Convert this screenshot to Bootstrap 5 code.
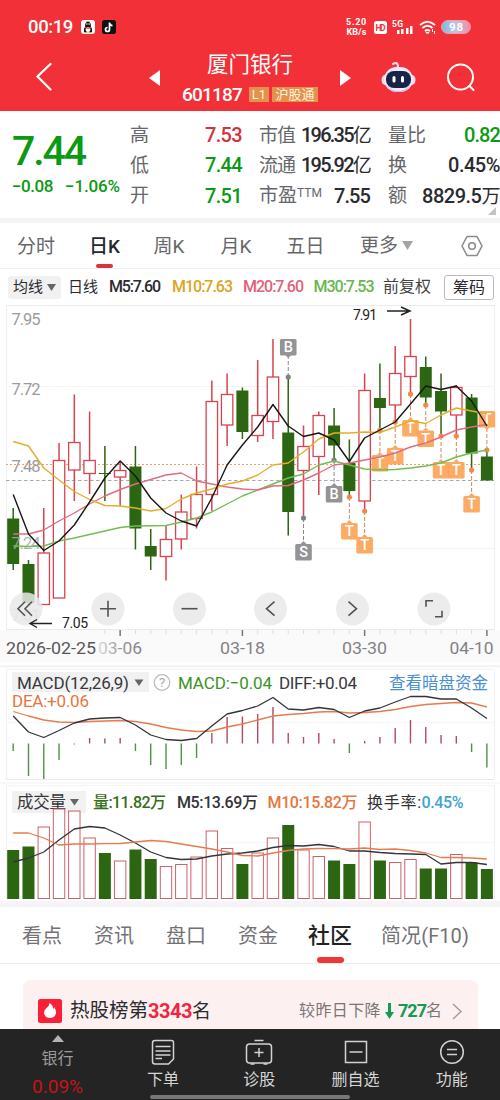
<!DOCTYPE html>
<html lang="zh-CN">
<head>
<meta charset="utf-8">
<meta name="viewport" content="width=device-width, initial-scale=1">
<title>厦门银行 601187</title>
<link href="https://cdn.jsdelivr.net/npm/bootstrap@5.3.0/dist/css/bootstrap.min.css" rel="stylesheet">
<style>
body{width:500px;height:1100px;overflow:hidden;background:#fff;color:#2b2b2f;font-family:Roboto,"Noto Sans CJK SC",sans-serif;line-height:1;font-size:19px}
svg{display:block;flex:none}
svg text{font-family:Roboto,"Noto Sans CJK SC",sans-serif}
span,b{white-space:nowrap}
.brand-top{background:#f23037;height:111px;color:#fff}
.status{height:52px;padding:2px 29px 0 28px}
.netspeed{font-size:9px;font-weight:700}
.netspeed span{height:10px;line-height:10px}
.topnav{height:59px}
.tagx{background:#e2924d;font-size:13px;height:15px;line-height:15px;color:#fff3dc;text-align:center}
.quote{height:107px;padding:9px 0 0 12px;grid-template-columns:118px 112px 111px 112px;column-gap:0;display:grid}
.kv{height:30.3px;color:#66666a}
.kv b{font-weight:500;color:#2b2b2f;font-size:20px}
.kv b i{font-style:normal;font-weight:400;font-size:19px}
.up{color:#d4323c!important}.down{color:#0b9a13!important}
.strip{background:#f4f4f5}
.period{height:46px;display:grid;grid-template-columns:72px 64.5px 67px 66px 73.5px 101px 40px;padding-left:17px;border-bottom:1px solid #f1f1f3;color:#66666a}
.period>*{height:45px;line-height:47px}
.bar{width:17px;height:4px;border-radius:2px;background:#d93340}
.malist{height:36px;font-size:16px;font-weight:500;display:grid;grid-template-columns:60px 41px 63px 71px 70.5px 69.5px 61px 50px;padding-left:8px}
.pill{background:#f1f1f2;height:23px;border-radius:3px;width:53px;padding-left:5px;font-weight:400;font-size:15px}
.chip{border:1px solid #bbb;border-radius:3px;width:50px;height:25px;line-height:23px;text-align:center;font-weight:400}
.subtabs{height:57px;display:grid;grid-template-columns:72px 72px 72px 70px 73px 100px;padding-left:22px;font-size:20px;color:#727276;border-bottom:1px solid #ececee}
.subtabs>*{height:56px;line-height:58px}
.hot{margin:16px 22px 0 23px;height:49px;background:#fcf0f0;border-radius:8px 8px 0 0;padding:12px 16px 0 15px}
.dock{background:#242424;height:71px;color:#d6d6d6;font-size:16px}
.dock .first{width:115px}
.home{position:absolute;left:150px;bottom:1.5px;width:200px;height:4px;border-radius:2px;background:#77777a}
</style>
</head>
<body class="position-relative">
<header class="brand-top">
  <div class="status d-flex align-items-center">
    <span style="font-size:18.500px;font-weight:500" data-w="45">00:19</span>
    <svg class="ms-2" width="14" height="14" viewBox="0 0 14 14"><rect width="14" height="14" rx="3" fill="#fff"/><path d="M3 12q-1-3 1-5 0-5.500 3-5.500T10 7q2 2 1 5z" fill="#151515"/><ellipse cx="7" cy="9.500" rx="2.400" ry="2.500" fill="#fff"/><path d="M4 6.500q3 2 6 0v1.500q-3 1.500-6 0z" fill="#d33"/><circle cx="5.900" cy="4" r=".8" fill="#fff"/><circle cx="8.100" cy="4" r=".8" fill="#fff"/><path d="M3.500 12.500h3M7.500 12.500h3" stroke="#ed9a28" stroke-width="1.200"/></svg>
    <svg style="margin-left:7px" width="14" height="14" viewBox="0 0 14 14"><rect width="14" height="14" rx="2.500" fill="#111"/><path d="M7.500 2.500v7a2 2 0 1 1-2-2M7.500 3q.5 2.500 3 2.700" fill="none" stroke="#fff" stroke-width="1.700"/></svg>
    <span class="ms-auto d-flex flex-column align-items-center netspeed"><span data-w="21">5.20</span><span data-w="20">KB/s</span></span>
    <svg style="margin-right:5px;margin-left:7px" width="13" height="13" viewBox="0 0 13 13"><rect width="13" height="13" rx="2.500" fill="#fff"/><text x="1.500" y="9.700" font-size="8.500" font-weight="700" fill="#f23037" textLength="10">HD</text></svg>
    <svg width="22" height="16" viewBox="0 0 22 16"><text x="0" y="7.500" font-size="8.500" font-weight="700" fill="#fff" textLength="11">5G</text><g fill="#fff"><rect x="5" y="11" width="2.500" height="4"/><rect x="9" y="10" width="2.500" height="5"/><rect x="14" y="9" width="2.500" height="6"/><rect x="18" y="7" width="2.500" height="8"/></g></svg>
    <svg style="margin-left:5px" width="18" height="15" viewBox="0 0 18 15" fill="none" stroke="#fff" stroke-width="1.900"><path d="M1 5q7.500-6.500 15 0M3.500 8q5-4.500 10 0M6 11q2.500-2 5 0"/><path d="M7 12.500h3L8.500 14zM13.500 9v3M15.500 11v3" stroke-width="1"/></svg>
    <svg style="margin-left:4px" width="30" height="14" viewBox="0 0 30 14"><defs><linearGradient id="bt"><stop offset="0" stop-color="#7fb8e2"/><stop offset=".45" stop-color="#b8c8e2"/><stop offset="1" stop-color="#f58aa5"/></linearGradient></defs><rect x=".5" y=".5" width="29" height="13" rx="6.500" fill="url(#bt)" stroke="#f69aa5"/><text x="8" y="11" font-size="11.500" font-weight="700" fill="#fff" textLength="14">98</text></svg>
  </div>
  <div class="topnav d-flex">
    <svg style="margin:10px 0 0 35px" width="17" height="30" viewBox="0 0 17 30"><path d="M15.500 2 2.500 14.500 15.500 27.500" fill="none" stroke="#fff" stroke-width="2.300" stroke-linecap="round"/></svg>
    <svg style="margin:18px 0 0 97px" width="11" height="16"><path d="M11 0v16L0 8z" fill="#fff"/></svg>
    <div style="width:180px" class="text-center">
      <div style="font-size:21.500px;line-height:25px">厦门银行</div>
      <div class="d-flex justify-content-center align-items-center" style="margin-top:7px;height:20px"><span style="font-size:19px;font-weight:500" data-w="60">601187</span><span class="tagx" style="margin-left:7px;width:20px">L1</span><span class="tagx" style="margin-left:3px;width:46px">沪股通</span></div>
    </div>
    <svg style="margin:18px 0 0" width="11" height="16"><path d="M0 0v16l11-8z" fill="#fff"/></svg>
    <svg style="margin:9px 0 0 30px" width="35" height="34" viewBox="0 0 35 34"><path d="M12 3q5-3 5 3" fill="none" stroke="#ecdcf4" stroke-width="2.200" stroke-linecap="round"/><ellipse cx="4" cy="19" rx="3.500" ry="5" fill="#e8ddf4"/><ellipse cx="31" cy="19" rx="3.500" ry="5" fill="#e8ddf4"/><rect x="3" y="6" width="29" height="25" rx="12.500" fill="#eee9fb"/><path d="M6 25q11 10 23 0-4 6-11.500 6T6 25" fill="#cdb3ea"/><rect x="5" y="10" width="25" height="17" rx="8" fill="#182348"/><rect x="11.500" y="15" width="3" height="6.500" rx="1.500" fill="#fff"/><rect x="20" y="15" width="3" height="6.500" rx="1.500" fill="#fff"/></svg>
    <svg style="margin:11px 0 0 30px" width="30" height="30" viewBox="0 0 30 30" fill="none" stroke="#fff" stroke-width="2"><circle cx="14.500" cy="14" r="12.500"/><path d="m23.500 23 4 4" stroke-linecap="round"/></svg>
  </div>
</header>

<section class="quote">
  <div style="padding-top:8px" class="down"><div style="font-size:41px;font-weight:500;height:39px;line-height:47px"><span data-w="73">7.44</span></div><div style="font-size:17px;padding-top:11px;font-weight:500" class="d-flex"><span data-w="41" style="width:53px">−0.08</span><span data-w="55">−1.06%</span></div></div>
  <div>
    <div class="kv d-flex align-items-center justify-content-between"><span>高</span><b class="up" data-w="37">7.53</b></div>
    <div class="kv d-flex align-items-center justify-content-between"><span>低</span><b class="down" data-w="37">7.44</b></div>
    <div class="kv d-flex align-items-center justify-content-between"><span>开</span><b class="down" data-w="37">7.51</b></div>
  </div>
  <div style="margin-left:17px;margin-right:-17px">
    <div class="kv d-flex align-items-center justify-content-between"><span data-w="36">市值</span><b data-w="69">196.35<i>亿</i></b></div>
    <div class="kv d-flex align-items-center justify-content-between"><span data-w="36">流通</span><b data-w="69">195.92<i>亿</i></b></div>
    <div class="kv d-flex align-items-center justify-content-between"><span>市盈<sup style="font-size:12px;top:-5px">TTM</sup></span><b data-w="36">7.55</b></div>
  </div>
  <div style="margin-left:35px;margin-right:-35px">
    <div class="kv d-flex align-items-center justify-content-between"><span>量比</span><b class="down" data-w="36">0.82</b></div>
    <div class="kv d-flex align-items-center justify-content-between"><span>换</span><b data-w="52">0.45%</b></div>
    <div class="kv d-flex align-items-center justify-content-between"><span>额</span><b data-w="78">8829.5<i>万</i></b></div>
    <svg class="ms-auto" style="margin-right:4px;margin-top:-4px" width="8" height="8"><path d="M8 0v8H0z" fill="#c4c4c6"/></svg>
  </div>
</section>
<div class="strip" style="height:5px"></div>

<nav class="period">
  <span>分时</span>
  <span style="color:#29292d;font-weight:500">日K<div class="bar" style="margin:-6px 0 0 7px"></div></span>
  <span>周K</span><span>月K</span><span>五日</span>
  <span class="d-flex align-items-center">更多<svg class="ms-1" width="11" height="9"><path d="M0 0h11L5.500 9z" fill="#a4a4a6"/></svg></span>
  <svg style="margin-top:12px;height:22px" width="22" height="22" viewBox="0 0 22 22" fill="none" stroke="#8b8b8f" stroke-width="1.600"><path d="M6 1.500h10L21 11l-5 9.500H6L1 11z" stroke-linejoin="round"/><circle cx="11" cy="11" r="3.300"/></svg>
</nav>
<div class="malist align-items-center">
  <span class="pill d-flex align-items-center">均线<svg class="ms-1" width="9" height="7"><path d="M0 0h9L4.500 7z" fill="#666"/></svg></span>
  <span style="font-weight:400;font-size:15px">日线</span><span data-w="51">M5:7.60</span><span data-w="60" style="color:#d9a520">M10:7.63</span><span data-w="60" style="color:#e25f7b">M20:7.60</span><span data-w="60" style="color:#66b84c">M30:7.53</span><span style="font-weight:400;color:#444">前复权</span><span class="chip">筹码</span>
</div>
<svg id="kline" width="500" height="360" viewBox="0 305 500 360"></svg>
<svg id="macd" width="500" height="117" viewBox="0 665 500 117"></svg>
<svg id="volume" width="500" height="125" viewBox="0 782 500 125"></svg>

<nav class="subtabs">
  <span>看点</span><span>资讯</span><span>盘口</span><span>资金</span>
  <span style="color:#222;font-size:22px;font-weight:500">社区<div class="bar" style="width:27px;height:6px;border-radius:3px;background:#ee3838;margin:-8px 0 0 9px"></div></span>
  <span data-w="88">简况(F10)</span>
</nav>
<section class="hot d-flex justify-content-between">
  <div class="d-flex align-items-center" style="height:38px">
    <svg width="24" height="24" viewBox="0 0 24 24"><rect width="24" height="24" rx="2.500" fill="#fa2036"/><path d="M11.500 4q4 2.500 3.500 6 1-.5 1-2 2.500 3 2 6-.8 5-6 5t-6-5q-.3-3 2.500-5 3-2 3-5z" fill="#fff"/></svg>
    <span style="margin-left:8px;font-size:19.500px" data-w="78">热股榜第</span><span style="font-size:20px;color:#ef2540;font-weight:700" data-w="44">3343</span><span>名</span>
  </div>
  <div class="d-flex align-items-center" style="height:38px;font-size:16px;color:#7b7577"><span data-w="82">较昨日下降</span><svg class="mx-1" width="9" height="16" viewBox="0 0 9 16"><path d="M4.500 0v11" stroke="#179a51" stroke-width="3"/><path d="M0 9h9l-4.500 7z" fill="#179a51"/></svg><span style="font-size:18px;color:#179a51;font-weight:700" data-w="28">727</span><span>名</span><svg style="margin-left:10px" width="10" height="17"><path d="m1 1 8 7.500L1 16" fill="none" stroke="#a39b9e" stroke-width="1.400"/></svg></div>
</section>

<footer class="dock d-flex text-center">
  <div class="first" style="color:#9c9c9c"><svg class="mx-auto" style="margin-top:6px" width="12" height="7"><path d="M6 0l6 7H0z" fill="#b5b5b5"/></svg><div style="margin-top:9px">银行</div><div style="color:#c81216;font-size:19px;margin-top:10px"><span data-w="51">0.09%</span></div></div>
  <div class="flex-fill" style="width:96px"><svg class="mx-auto" style="margin-top:10px" width="24" height="27" viewBox="0 0 24 27" fill="none" stroke="#d2d2d2" stroke-width="1.500"><path d="M4 1.500h16.500q2 0 2 2V20l-5 5H4q-2.500 0-2.500-2.500V4Q1.500 1.500 4 1.500zM4.500 7.500h15M4.500 12h15M4.500 16h15M4.500 19.500H11"/></svg><div style="margin-top:6px">下单</div></div>
  <div class="flex-fill" style="width:96px"><svg class="mx-auto" style="margin-top:10px" width="28" height="27" viewBox="0 0 28 27" fill="none" stroke="#d2d2d2" stroke-width="1.500"><path d="M9.500 1.500h9M14 9v9M9.500 13.500h9M5.500 25h4M18.500 25h4"/><rect x="1.500" y="5" width="25" height="19" rx="3"/></svg><div style="margin-top:6px">诊股</div></div>
  <div class="flex-fill" style="width:96px"><svg class="mx-auto" style="margin-top:10px" width="24" height="27" viewBox="0 0 24 27" fill="none" stroke="#d2d2d2" stroke-width="1.500"><path d="M1.500 2.500h21v21h-21zM5.500 13h13"/></svg><div style="margin-top:6px">删自选</div></div>
  <div class="flex-fill" style="width:96px"><svg class="mx-auto" style="margin-top:10px" width="26" height="27" viewBox="0 0 26 27" fill="none" stroke="#d2d2d2" stroke-width="1.500"><circle cx="13" cy="13" r="11.300"/><path d="M8 10.500h10M8 15.500h10"/></svg><div style="margin-top:6px">功能</div></div>
</footer>
<div class="home"></div>

<script src="https://cdn.jsdelivr.net/npm/bootstrap@5.3.0/dist/js/bootstrap.bundle.min.js"></script>
<script>
const X = i => 13.2 + i * 15.28;
const GREEN = '#2c6612', RED = '#d8434f';
// each candle: rising?, high, body top, body bottom, low
const candles = [
[0,508,518.5,564,570],[0,560,564,603,606],[1,508,553,604.5,604.5],[1,443,460.5,598,598],[1,394.500,442.5,470,501],
[1,411.5,460.5,473.5,494],[0,446,473,474,501],[1,462,470.5,477,506],[0,446,466.5,528.5,549.5],[0,529,546,556.5,570],
[1,525,539.5,556.5,580.5],[1,494.5,512,539,549.5],[1,466.5,494.5,518.5,528.5],[1,380.5,401.5,494.5,511],[1,373.5,394.5,425,446],
[0,387.5,390.5,432,439],[1,360,415.5,435.5,442],[1,339,377,421.5,439],[0,377,432.5,512,535.5],[1,425.5,446.5,470.5,518],
[1,411.5,415.5,456.5,495],[0,408,425.5,445.5,460],[0,439.5,463,491,497],[1,373.5,390.5,501,511],[0,363.5,398,408,430],
[1,346,373.5,405,422],[1,319,356.5,376.5,394],[0,356.5,367,397.5,405],[0,373.5,391,411.5,435],[1,385,387.5,415,435],
[0,394,397.5,453.5,470],[0,450,456.5,480.5,480.5]];
const line = (ys, c, w) => `<polyline fill="none" stroke="${c}" stroke-width="${w||1.2}" stroke-linejoin="round" points="${ys.map((y,i)=>X(i).toFixed(1)+','+y).join(' ')}"/>`;
const txt = (x, y, s, size, c, w, extra) => `<text x="${x}" y="${y}" font-size="${size}" fill="${c}" ${w?`textLength="${w}"`:''} ${extra||''}>${s}</text>`;
const hl = (y,c) => `<path d="M6 ${y}H494" stroke="${c||'#f3f3f4'}"/>`;

let k = `<defs><linearGradient id="fade"><stop offset="0" stop-color="#dcdcde"/><stop offset=".5" stop-color="#9a9a9d"/><stop offset="1" stop-color="#828286"/></linearGradient></defs><rect x="0" y="630" width="500" height="35" fill="#fafafa"/><rect x="0" y="662" width="500" height="3" fill="#fff"/>`;
k += `<path d="M6.500 305V630M494.500 305V630" stroke="#eef0f3"/>` + hl(305.5,'#ebebee') + hl(386.5) + hl(467.5,'#f8f8f8') + hl(548.5) + hl(629.5,'#ebebee');
[['7.95',325],['7.72',394.5],['7.48',471.5],['7.24',549],['7.01',621]].forEach(([s,y],i)=>k+= i==3?'':txt(11.5,y,s,16.5,i<4?'#9b9b9e':'#c9c9cb',29));
k += `<path d="M6 464.500H494" stroke="#e8a16a" stroke-dasharray="2 2"/><path d="M6 480.500H494" stroke="#a9a9a9" stroke-dasharray="3.500 2.500"/>`;
candles.forEach(([r,h,t,b,l],i)=>{
  const x=X(i), c=r?RED:GREEN;
  k += `<path d="M${x} ${h}V${r?t:b}M${x} ${b}V${l}" stroke="${c}" stroke-width="1.500"/>`;
  k += r?`<rect x="${x-5.7}" y="${t}" width="11.400" height="${b-t}" fill="#fff" stroke="${c}" stroke-width="1.300"/>`:`<rect x="${x-6}" y="${t}" width="12" height="${b-t}" fill="${c}"/>`;
});
k += txt(11.5,549,'7.24',16.5,'#a9a9ab',29,'opacity=".85"');
const tags=[['B',18,347,377,0],['S',19,552,518,0],['B',21,494,460,0],['T',22,531,497,1],['T',23,545,511,1],['T',24,463,430,1],['T',25,456,422,1],['T',26,428,394,1],['T',27,438.5,405,1],['T',28,470,436,1],['T',29,470,436,1],['T',30,504,470,1],['T',31,419,450,1]];
tags.forEach(([s,i,y,d,o])=>{
  const x=X(i), up=y<d, e=up?y+8:y-8, c=o?'#fca458':'#949494';
  k += `<path d="M${x} ${d}V${e}" stroke="${o?'#ca8b5a':'#888'}" stroke-dasharray="4 2"/><circle cx="${x}" cy="${d}" r="2.600" fill="${o?'#f28a45':'#7f8282'}"/>`;
  k += `<g ${o?'opacity=".92"':''}><rect x="${x-8.3}" y="${y-8}" width="16.600" height="16.500" rx="1.500" fill="${c}"/><path d="M${x-3} ${e}l3 ${up?3:-3} 3 ${up?-3:3}z" fill="${c}"/></g>`+txt(x,y+5.3,s,14.5,'#fff',0,'text-anchor="middle" font-weight="500"');
});
k += line([546,546.5,546,541,538,534.5,531,527.5,526,525.7,525.5,522,518,512,504,496,490,484,478,474,465,461,465,469,470,469.5,468,466,463,457,453,450],'#73bd55',1.4);
k += line([534,534,530,521,513,504,496,489.5,484,479.5,475,473,481,484,487,489,490,486,485.5,480,473,465,463,460,457,453,447,443,437,430,427,424.5],'#dd6d80',1.4);
k += line([441.5,446,468,480,491.5,499.5,505.5,506,508,511,508.5,499,493,489,484,481,475,465,463,452,439,433,433,432,432.5,427,421,423.5,415,408,411,414],'#e3ae2c',1.4);
k += line([494.5,534,550.5,541,525,502,478,461,476,498,513,521,526,498,465,445,427,404.5,426,436.5,433,440,461.5,438,430,422,404,386,389.5,386,401,426],'#171717',1.4);
k += txt(353,320,'7.91',14,'#222',24)+`<path d="M387 311H409M401 307l9 4-9 4" fill="none" stroke="#222" stroke-width="1.500"/>`;
const icons=['M-1-7l-7 7 7 7M6-7l-7 7 7 7','M-8 0H8M0-8V8','M-8 0H8','M4-7l-8 7 8 7','M-4-7l8 7-8 7','M-8-2V-8H-1M8 2V8H1'];
[26,108,189.5,270.5,352.5,434].forEach((x,i)=>k+=`<circle cx="${x}" cy="609" r="16.500" fill="#e9e9e9" fill-opacity=".85"/><path transform="translate(${x} 608.700)" d="${icons[i]}" fill="none" stroke="#535353" stroke-width="1.600"/>`);
k += txt(62,628,'7.05',14,'#222',26)+`<path d="M52 623.500H31M37 619.500l-7 4 7 4" fill="none" stroke="#222" stroke-width="1.400"/>`;
for(let i=6;i<32;i++) k += `<path d="M${X(i)} 630v${i%8==7?6:4}" stroke="${i%8==7?'#777':'#ddd'}" stroke-width="${i%8==7?1.5:1}"/>`;
const fit='lengthAdjust="spacingAndGlyphs"';
k += txt(98,654,'03-06',16.5,'url(#fade)',44,fit)+txt(220,654,'03-18',16.5,'#828286',45,fit)+txt(342,654,'03-30',16.5,'#828286',45,fit)+txt(449.5,654,'04-10',16.5,'#828286',44,fit)+txt(6,654,'2026-02-25',16.5,'#57575a',90,fit);
kline.innerHTML = k;

const drop=(x,y)=>`<path d="M${x} ${y}h9l-4.500 6.500z" fill="#666"/>`;
let m = `<rect x="0" y="665" width="500" height="2.500" fill="#f5f5f7"/><path d="M6.500 670V779M494.500 670V779" stroke="#eef0f3"/>`+hl(669.5)+hl(722.5,'#f6f6f6')+hl(779.5,'#eaeaec');
m += `<rect x="12" y="672" width="137" height="20" fill="#f1f1f2"/>`+txt(17,689,'MACD(12,26,9)',17,'#37373b',112)+drop(134.5,679.5)+`<circle cx="162" cy="682.500" r="7.800" fill="none" stroke="#bcbcbe" stroke-width="1.200"/>`+txt(162,687.3,'?',13,'#aaa',0,'text-anchor="middle"');
m += txt(178,689,'MACD:−0.04',17,'#3a9422',94)+txt(279,689,'DIFF:+0.04',17,'#37373b',78)+txt(389,689,'查看暗盘资金',16.5,'#4a8fd2',99)+txt(12,707,'DEA:+0.06',17,'#e87540',77);
[751,776,779,760,744.5,738,738.5,738,751,765,769,765,758,733,717,716.5,714,707,733,737,733,739,753,741,737,728,720,727,735,736,752,767.5].forEach((y,i)=>m+=`<path d="M${X(i)} 743.500V${y}" stroke="${y>743.5?'#4e9245':'#b5495c'}" stroke-width="1.400"/>`);
m += line([711.5,716,720,722,722.5,721.5,721,720.5,721.5,724,727.5,730,731.5,731,727,724,720,716,714.5,713.5,712,711.5,713,712.5,711.5,709.5,706.5,704.5,703.5,702.5,703,707],'#e57b4e',1.3);
m += line([716,732,737.5,730.5,723,719,718,717.5,725,735,739.5,740.5,738.5,726,714,710.5,706,697.5,709,710,707.5,709.5,717.5,711,708,702,696.5,696.5,699,699,708,718.5],'#33343c',1.3);
macd.innerHTML = m;

let v = `<rect x="0" y="782" width="500" height="2" fill="#f9f9fa"/><path d="M6.500 786V899M494.500 786V899" stroke="#eef0f3"/>`+hl(785.5)+hl(842.5,'#f6f6f6')+`<rect x="0" y="901" width="500" height="6" fill="#f6f4f6"/>`;
v += `<rect x="12" y="791" width="74" height="22" fill="#f1f1f2"/>`+txt(17,808,'成交量',16.5,'#37373b',49)+drop(70,799)+txt(93,808,'量:11.82万',16,'#356f1d',73,'font-weight="500"')+txt(177,808,'M5:13.69万',16,'#333338',81,'font-weight="500"')+txt(267.5,808,'M10:15.82万',16,'#e87540',90,'font-weight="500"')+txt(367,808,'换手率:',16,'#333338',54)+txt(421.5,808,'0.45%',16,'#41a2d0',42,'font-weight="500"');
[850,846.5,827,809,811,838,853,861,849.5,859,866.5,864.5,857,831,848.5,864,853,838,825,850,856.5,860.5,864,822,860.5,862.5,859.5,868.5,868.5,854.5,862.5,869].forEach((y,i)=>{
  v += candles[i][0]?`<rect x="${X(i)-5.7}" y="${y}" width="11.400" height="${898.5-y}" fill="#fff" fill-opacity=".6" stroke="#d0606a"/>`:`<rect x="${X(i)-6}" y="${y}" width="12" height="${899-y}" fill="${GREEN}"/>`;
});
v += line([862,858,852,840,829,826.5,828,835,843,852,857.5,859.5,859,856,854,853,851,847.5,845.5,846,844.5,846.5,851,851,852.5,853.5,854,854.5,864,862.5,862.5,864.5],'#33343c',1.3);
v += line([833,833,838,845,844,844,843.7,843.5,842,840.5,841.5,844,846.5,849,852,855.5,856,853,850.5,849,848.5,848.7,849,848,849.5,849,850.5,853,857.5,857.5,858,859],'#e57b4e',1.3);
volume.innerHTML = v;

document.querySelectorAll('[data-w]').forEach(e=>{
  const r=document.createRange(); r.selectNodeContents(e);
  const d=(+e.dataset.w-r.getBoundingClientRect().width)/e.textContent.length;
  e.style.letterSpacing=d.toFixed(3)+'px';
});
</script>
</body>
</html>
